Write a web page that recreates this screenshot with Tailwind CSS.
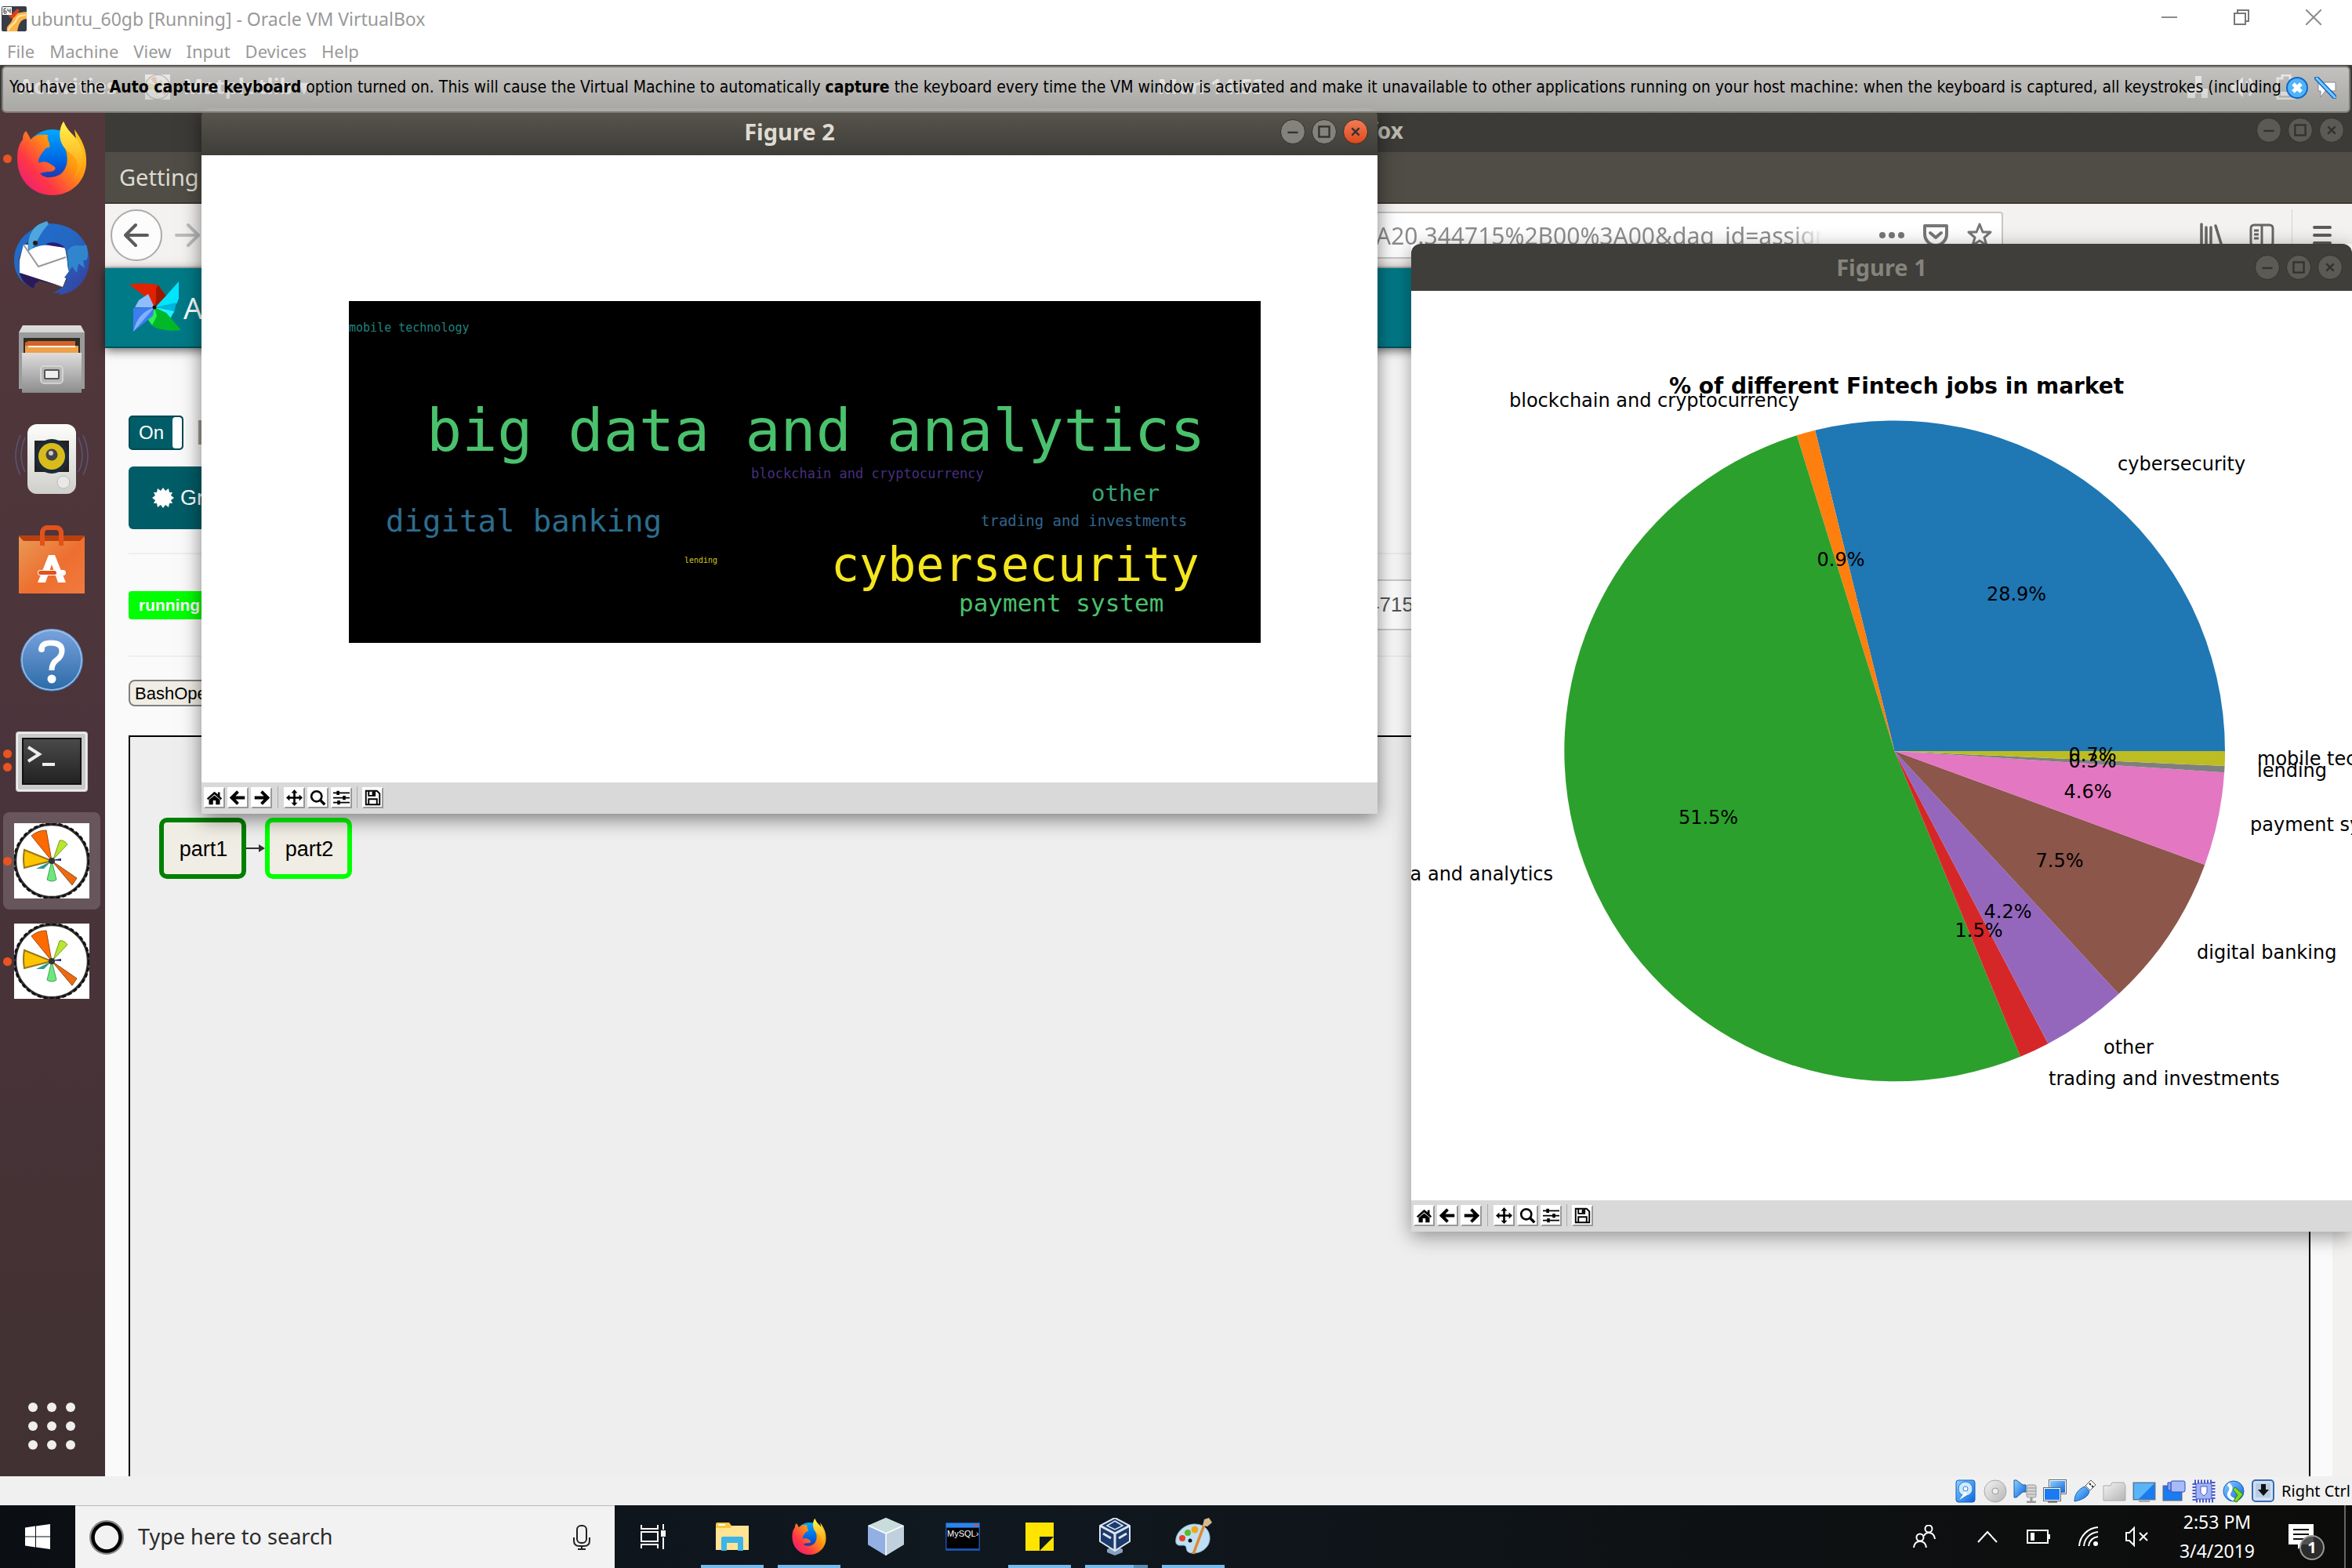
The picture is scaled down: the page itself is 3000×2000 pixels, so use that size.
<!DOCTYPE html>
<html lang="en">
<head>
<meta charset="utf-8">
<title>ubuntu_60gb [Running] - Oracle VM VirtualBox</title>
<script src="https://cdn.jsdelivr.net/npm/@tailwindcss/browser@4"></script>
</head>
<body class="flex h-screen flex-col overflow-hidden bg-white font-['Noto_Sans','Open_Sans',sans-serif] text-black">

<!-- Shared icons -->
<svg class="absolute size-0" aria-hidden="true">
  <defs>
    <linearGradient id="fxBody" x1="1" y1="0" x2="0" y2="1"><stop offset="0" stop-color="#ffe226"/><stop offset=".4" stop-color="#ff980e"/><stop offset=".7" stop-color="#ff3647"/><stop offset="1" stop-color="#e31587"/></linearGradient>
    <linearGradient id="fxGlobe" x1="0" y1="0" x2="0" y2="1"><stop offset="0" stop-color="#00a8ff"/><stop offset=".6" stop-color="#0060df"/><stop offset="1" stop-color="#3a1e8c"/></linearGradient>
    <linearGradient id="fxTail" x1="0" y1="0" x2="0" y2="1"><stop offset="0" stop-color="#fff44f"/><stop offset="1" stop-color="#ff980e"/></linearGradient>
    <linearGradient id="tb" x1="0" y1="0" x2="1" y2="1"><stop offset="0" stop-color="#1f6fd0"/><stop offset=".5" stop-color="#2467c0"/><stop offset="1" stop-color="#3a3a9a"/></linearGradient>
    <linearGradient id="silver" x1="0" y1="0" x2="0" y2="1"><stop offset="0" stop-color="#dedede"/><stop offset="1" stop-color="#8c8c8c"/></linearGradient>
    <linearGradient id="box" x1="0" y1="0" x2="0" y2="1"><stop offset="0" stop-color="#fdfdfc"/><stop offset="1" stop-color="#cfcfcb"/></linearGradient>
    <linearGradient id="bag" x1="0" y1="0" x2="1" y2="1"><stop offset="0" stop-color="#e89a56"/><stop offset=".55" stop-color="#ee6f2f"/><stop offset="1" stop-color="#f07a40"/></linearGradient>
    <linearGradient id="help" x1="0" y1="0" x2="0" y2="1"><stop offset="0" stop-color="#7aa3de"/><stop offset="1" stop-color="#2a6aa6"/></linearGradient>
    <linearGradient id="screen" x1="0" y1="0" x2="0" y2="1"><stop offset="0" stop-color="#4a4a4a"/><stop offset="1" stop-color="#222"/></linearGradient>
    <linearGradient id="vb" x1="0" y1="0" x2="1" y2="1"><stop offset="0" stop-color="#8cd2ff"/><stop offset="1" stop-color="#0a63e0"/></linearGradient>
    <linearGradient id="grey" x1="0" y1="0" x2="1" y2="1"><stop offset="0" stop-color="#f4f4f4"/><stop offset="1" stop-color="#b4b4b4"/></linearGradient>

    <symbol id="firefox" viewBox="0 0 90 94">
      <circle cx="46" cy="46" r="36" fill="url(#fxGlobe)"/>
      <path d="M12 12C15 16 17 20 18 23C26 15 33 17 40 17C38 24 44 27 42 33C36 33 35 38 32 41C27 48 27 54 31 52C38 49 46 56 49 58C51 62 46 64 40 64C34 65 30 66 30 66C34 72 43 72 50 70C64 66 68 50 62 34C55 22 53 10 60 0C66 14 72 16 76 22L74 10C84 24 90 36 89 54C88 76 70 94 46 94C20 94 1 74 1 48C1 34 4 28 8 23C8 18 9 15 12 12Z" fill="url(#fxBody)"/>
      <path d="M60 0C66 14 73 16 79 26C88 40 86 60 74 72C82 56 78 48 68 40C54 30 52 14 60 0Z" fill="url(#fxTail)"/>
    </symbol>
    <symbol id="mpl" viewBox="0 0 96 96">
      <rect width="96" height="96" fill="#fff"/>
      <circle cx="48" cy="48" r="46.500" fill="#fff" stroke="#333" stroke-width="3.500"/>
      <circle cx="48" cy="48" r="47.500" fill="none" stroke="#111" stroke-width="3" stroke-dasharray="5 3"/>
      <path d="M48 48L22 16Q30 9 41 9Z" fill="#ff6a00" stroke="#9c4a10"/>
      <path d="M48 48L13 57Q11 46 13 34Z" fill="#ffc400" stroke="#96761a" stroke-width="2"/>
      <path d="M50 46L58 22Q64 21 68 27Z" fill="#b8e62e" stroke="#7a9a2a"/>
      <path d="M48 48L80 70L74 79Z" fill="#ee6a10" stroke="#8a4a1a"/>
      <path d="M48 48L42 72Q48 76 54 72Z" fill="#6be87a" stroke="#4a9a5a"/>
      <path d="M48 48L28 58L38 58Z" fill="#2a9a90"/><path d="M46 47L60 45L60 48Z" fill="#1a2a7a"/>
      <circle cx="48" cy="48" r="4" fill="#333"/>
    </symbol>
    <symbol id="t-home" viewBox="0 0 24 24"><path d="M12 3L1 13L3 15L12 7L21 15L23 13L20 10V4H17V7ZM4 15V22H10V16H14V22H20V15L12 8.500Z"/></symbol>
    <symbol id="t-back" viewBox="0 0 24 24"><path d="M12 3L3 12L12 21M4 12H22" fill="none" stroke="#000" stroke-width="4.500"/></symbol>
    <symbol id="t-fwd" viewBox="0 0 24 24"><path d="M12 3L21 12L12 21M20 12H2" fill="none" stroke="#000" stroke-width="4.500"/></symbol>
    <symbol id="t-pan" viewBox="0 0 24 24"><path d="M12 0L16.500 5H13.500V10.500H19V7.500L24 12L19 16.500V13.500H13.500V19H16.500L12 24L7.500 19H10.500V13.500H5V16.500L0 12L5 7.500V10.500H10.500V5H7.500Z"/></symbol>
    <symbol id="t-zoom" viewBox="0 0 24 24"><circle cx="10" cy="10" r="7.500" fill="none" stroke="#000" stroke-width="3"/><path d="M15 15L22 22" stroke="#000" stroke-width="4"/></symbol>
    <symbol id="t-sub" viewBox="0 0 24 24"><path d="M0 5H24M0 12H24M0 19H24" stroke="#000" stroke-width="2"/><path d="M5 2H9V8H5ZM14 9H18V15H14ZM6 16H10V22H6Z"/></symbol>
    <symbol id="t-save" viewBox="0 0 24 24"><path d="M2 2H18L22 6V22H2Z M6 22V14H18V22M6 2V9H15V2" fill="none" stroke="#000" stroke-width="2.200"/><path d="M11 3H14V8H11Z"/></symbol>
    <symbol id="w-min" viewBox="0 0 32 32"><path d="M9 17H23" stroke="#33322e" stroke-width="2.500"/></symbol>
    <symbol id="w-max" viewBox="0 0 32 32"><rect x="9" y="9" width="14" height="14" fill="none" stroke="#33322e" stroke-width="2.500"/></symbol>
    <symbol id="w-close" viewBox="0 0 32 32"><path d="M11 11L21 21M21 11L11 21" stroke="#33322e" stroke-width="2.500"/></symbol>
  </defs>
</svg>

<!-- Host window title bar -->
<header class="flex h-12 shrink-0 items-center text-[#999]">
  <svg class="ml-[2px] h-8 w-8" viewBox="0 0 32 32"><rect width="32" height="32" rx="2" fill="#363c48"/><path d="M7 32C5 24 12 24 14 16C16 8 22 8 32 7V16C24 17 22 22 20 32Z" fill="#fdb44a"/><path d="M7 8C12 20 16 16 23 5L20 3L13 10Z" fill="#d8421a"/><path d="M9 31C9 24 17 24 19 17C21 11 26 12 31 11" fill="none" stroke="#ffe9a8" stroke-width="2"/><rect x="1" y="1" width="12" height="10" fill="#fff"/><path d="M6 3H3V9H6V6H3M8 3V6H11M11 3V9" stroke="#333" fill="none"/></svg>
  <h1 class="ml-[5px] whitespace-nowrap text-[23px] leading-8">ubuntu_60gb [Running] - Oracle VM VirtualBox</h1>
  <div class="ml-auto flex pr-[3px] pb-1">
    <button aria-label="Minimize" class="grid h-11 w-[92px] place-items-center"><svg class="size-5" viewBox="0 0 20 20"><path d="M0 10H20" stroke="#8c8c8c" stroke-width="2"/></svg></button>
    <button aria-label="Restore" class="grid h-11 w-[92px] place-items-center"><svg class="size-5" viewBox="0 0 20 20" fill="none" stroke="#777" stroke-width="2"><path d="M1 5H15V19H1ZM5 5V1H19V15H15"/></svg></button>
    <button aria-label="Close" class="grid h-11 w-[92px] place-items-center"><svg class="size-5" viewBox="0 0 20 20"><path d="M0 0L20 20M20 0L0 20" stroke="#8c8c8c" stroke-width="2"/></svg></button>
  </div>
</header>
<nav class="flex h-[35px] shrink-0 items-center gap-[19px] border-b border-[#e4e4e4] pl-[9px] text-[22px] leading-8 text-[#999]">
  <a href="#">File</a><a href="#">Machine</a><a href="#">View</a><a href="#">Input</a><a href="#">Devices</a><a href="#">Help</a>
</nav>

<!-- Guest screen -->
<main class="relative flex min-h-0 flex-1 flex-col overflow-hidden bg-[#eee]">
  <!-- GNOME top bar -->
  <div class="flex h-[55px] shrink-0 items-center bg-[#3c3b37] px-6 text-[27px] font-bold text-white">
    <div class="flex flex-1 items-center gap-9"><span>Activities</span><span class="flex items-center gap-4"><svg class="size-8"><use href="#mpl"/></svg>Matplotlib ▾</span></div>
    <time class="ml-[134px]">Mon 14:53</time>
    <div class="flex flex-1 justify-end gap-6 pr-11">
      <svg class="size-8" viewBox="0 0 32 32" fill="#fff"><path d="M12 2H20V12H16V18H28V30H20V24H12V30H2V18H12Z"/></svg>
      <svg class="size-8" viewBox="0 0 32 32" fill="#fff"><path d="M2 11H9L17 3V29L9 21H2Z"/><path d="M21 9Q26 16 21 23M25 5Q33 16 25 27" fill="none" stroke="#fff" stroke-width="3"/></svg>
      <svg class="size-8" viewBox="0 0 32 32"><path d="M5 5H11V1H21V5H27V31H5Z" fill="none" stroke="#fff" stroke-width="3"/><path d="M9 22H23V27H9Z" fill="#fff"/></svg>
    </div>
  </div>

  <div class="flex min-h-0 flex-1">
    <!-- Dock -->
    <aside class="flex w-[134px] shrink-0 flex-col bg-linear-to-b from-[#53383b] via-[#4a343b] to-[#413132] pr-[2px]">
      <button aria-label="Firefox" class="relative grid h-32 place-items-center"><span class="absolute left-1 size-[11px] rounded-full bg-[#e95420]"></span><svg class="h-[94px] w-[90px]"><use href="#firefox"/></svg></button>
      <button aria-label="Thunderbird" class="grid h-32 place-items-center">
        <svg class="size-24" viewBox="0 0 96 96"><path d="M38 6C14 10 0 30 0 50C0 68 10 80 25 86L30 74L8 66L6 48L14 30Z" fill="url(#tb)"/><path d="M7 50L12 30L37 30L65 34L70 64L62 84L7 66Z" fill="#fff"/><path d="M12 30L31 58L66 46" fill="none" stroke="#999" stroke-width="2"/><path d="M7 66L60 83L32 76L27 80L25 86C16 82 9 76 7 66Z" fill="#2a1a5a"/><path d="M42 0L34 3C22 8 16 20 18 38C30 30 46 28 64 34C70 42 66 56 70 64L64 72L68 74L62 84L50 92L60 91L56 94C84 92 96 70 96 48C94 18 70 2 42 3Z" fill="url(#tb)"/><path d="M42 0L32 4C22 10 16 22 19 38C30 30 30 18 44 4Z" fill="#4fa6dc"/><path d="M68 38C76 26 84 34 92 30C96 44 94 52 88 50L90 60L82 54L80 66L74 58L70 64Z" fill="#2f86cc"/><path d="M40 29Q54 24 65 34L48 31Z" fill="#2a1a7a"/><circle cx="27" cy="28" r="3" fill="#2b1a10"/></svg>
      </button>
      <button aria-label="Files" class="grid h-32 place-items-center">
        <svg class="h-[88px] w-[84px]" viewBox="0 0 84 88"><path d="M5 1H79L84 10V82H0V10Z" fill="url(#silver)"/><path d="M0 10H84V82H0Z" fill="#9b9b9b"/><path d="M6 17H78V38H6Z" fill="#2c2c28"/><path d="M12 21H72V38H8V23Z" fill="#d4622a"/><path d="M8 27H76V38H8Z" fill="#f0a048"/><path d="M12 28H72" stroke="#fff" stroke-width="2"/><path d="M4 36H80V87H4Z" fill="url(#silver)"/><rect x="28" y="53" width="28" height="22" rx="4" fill="#b8b8b8" stroke="#ddd" stroke-width="1.500"/><rect x="33" y="58" width="18" height="11" rx="1" fill="#eee" stroke="#555" stroke-width="2"/></svg>
      </button>
      <button aria-label="Rhythmbox" class="grid h-32 place-items-center">
        <svg class="h-[92px] w-24" viewBox="0 0 96 92"><path d="M8 15Q-4 42 8 66M88 15Q100 42 88 66M14 18Q4 42 14 62M82 18Q92 42 82 62" stroke="#5a5478" fill="none" stroke-width="1.500"/><rect x="17" y="1" width="62" height="89" rx="12" fill="url(#box)"/><path d="M26 22H70V62H26Z" fill="#222"/><circle cx="48" cy="42" r="22" fill="#1d2a38"/><circle cx="48" cy="42" r="17" fill="#d8bc1c"/><circle cx="48" cy="40" r="7.500" fill="#444"/><circle cx="47" cy="38" r="3" fill="#ccc"/><circle cx="63" cy="75" r="8" fill="#e8e8e8" stroke="#bbb"/></svg>
      </button>
      <button aria-label="Ubuntu Software" class="grid h-32 place-items-center">
        <svg class="h-[88px] w-[84px]" viewBox="0 0 84 88"><path d="M0 13H84L79 26H5Z" fill="#b8400e"/><path d="M0 14L6 20H78L84 14V87H0Z" fill="url(#bag)"/><path d="M30 26V8Q32 3 36 3H48Q52 3 54 8V26" fill="none" stroke="#e2521c" stroke-width="6"/><path d="M24 73L38 38H46L60 73H50L42 50L34 73Z" fill="#fff"/><rect x="24" y="57" width="36" height="7" rx="3.500" fill="#fff"/><rect x="25" y="58" width="23" height="5" rx="2.500" fill="#e2521c"/></svg>
      </button>
      <button aria-label="Help" class="grid h-32 place-items-center">
        <svg class="size-[82px]" viewBox="0 0 82 82"><circle cx="41" cy="41" r="40" fill="url(#help)"/><circle cx="41" cy="41" r="38" fill="none" stroke="#9dc0ea" stroke-width="1.500"/><path d="M28 27Q28 19 40 19Q54 19 54 29Q54 36 47 41Q41 45 41 54" fill="none" stroke="#fff" stroke-width="7"/><circle cx="28" cy="27" r="4" fill="#fff"/><circle cx="41" cy="65" r="5.500" fill="#fff"/></svg>
      </button>
      <button aria-label="Terminal" class="relative grid h-32 place-items-center pt-1"><span class="absolute left-1 flex flex-col gap-[6px]"><span class="size-[11px] rounded-full bg-[#e95420]"></span><span class="size-[11px] rounded-full bg-[#e95420]"></span></span>
        <svg class="h-[78px] w-[92px]" viewBox="0 0 92 78"><rect width="92" height="77" rx="4" fill="#c9c9c9"/><rect x="2" y="2" width="88" height="73" rx="3" fill="none" stroke="#eee" stroke-width="2"/><rect x="8" y="8" width="76" height="60" fill="#111"/><rect x="10" y="10" width="72" height="56" fill="url(#screen)"/><path d="M16 20L30 29L16 38" fill="none" stroke="#eee" stroke-width="4"/><path d="M34 42H50" stroke="#eee" stroke-width="4"/></svg>
      </button>
      <button aria-label="Figure 2" class="relative grid h-32 place-items-center"><span class="absolute inset-y-[2px] left-1 w-[124px] rounded-lg bg-white/17"></span><span class="absolute left-1 size-[11px] rounded-full bg-[#e95420]"></span><svg class="relative size-24"><use href="#mpl"/></svg></button>
      <button aria-label="Figure 1" class="relative grid h-32 place-items-center"><span class="absolute left-1 size-[11px] rounded-full bg-[#e95420]"></span><svg class="size-24"><use href="#mpl"/></svg></button>
      <button aria-label="Show Applications" class="mt-auto grid h-32 place-items-center">
        <svg class="size-[60px]" viewBox="0 0 60 60" fill="#f0eeee"><circle cx="6" cy="6" r="6"/><circle cx="30" cy="6" r="6"/><circle cx="54" cy="6" r="6"/><circle cx="6" cy="30" r="6"/><circle cx="30" cy="30" r="6"/><circle cx="54" cy="30" r="6"/><circle cx="6" cy="54" r="6"/><circle cx="30" cy="54" r="6"/><circle cx="54" cy="54" r="6"/></svg>
      </button>
    </aside>

    <!-- Firefox window -->
    <section class="flex min-w-0 flex-1 flex-col bg-[#fafafa]">
      <div class="flex h-14 shrink-0 items-center justify-end bg-[#3c3b37] pr-[10px]">
        <div class="mr-auto w-[1656px] text-right text-[28px] font-bold text-[#bdb9b0]">Mozilla Firefox</div>
        <div class="flex gap-2">
          <button aria-label="Minimize" class="size-8 rounded-full border border-[#33322e] bg-[#5b5a54]"><svg class="size-full"><use href="#w-min"/></svg></button>
          <button aria-label="Maximize" class="size-8 rounded-full border border-[#33322e] bg-[#5b5a54]"><svg class="size-full"><use href="#w-max"/></svg></button>
          <button aria-label="Close" class="size-8 rounded-full border border-[#33322e] bg-[#5b5a54]"><svg class="size-full"><use href="#w-close"/></svg></button>
        </div>
      </div>
      <div class="flex h-[66px] shrink-0 items-center border-b-2 border-[#3a3833] bg-[#504d46] pl-[18px] text-[29px] text-[#dfdbd2]"><a href="#">Getting</a></div>
      <div class="flex h-[82px] shrink-0 items-center border-b-2 border-[#cbc8c5] bg-[#f3f2f0] pl-[7px] pr-[26px] text-[#6a6968]">
        <button aria-label="Back" class="grid size-[66px] shrink-0 place-items-center rounded-full border-2 border-[#adaba9] bg-[#fcfcfc]"><svg class="size-8" viewBox="0 0 32 32" fill="none" stroke="#5c5c5c" stroke-width="4" stroke-linecap="round" stroke-linejoin="round"><path d="M15 3L2 16L15 29M3 16H30"/></svg></button>
        <button aria-label="Forward" class="ml-4 shrink-0"><svg class="size-8" viewBox="0 0 32 32" fill="none" stroke="#bbb" stroke-width="4" stroke-linecap="round" stroke-linejoin="round"><path d="M17 3L30 16L17 29M29 16H2"/></svg></button>
        <div class="ml-[500px] mr-[250px] flex h-[60px] min-w-0 flex-1 items-center justify-end rounded-[4px] border-2 border-[#cac7c4] bg-white pr-3">
          <input aria-label="Address" class="mr-[72px] h-12 w-[570px] bg-linear-to-r from-[#8c8c8c] from-92% to-transparent bg-clip-text text-[30px] text-transparent outline-none" value="A20.344715%2B00%3A00&amp;dag_id=assignn">
          <button aria-label="Page actions" class="mr-6"><svg class="size-8" viewBox="0 0 32 32" fill="#777"><circle cx="4" cy="16" r="4"/><circle cx="16" cy="16" r="4"/><circle cx="28" cy="16" r="4"/></svg></button>
          <button aria-label="Save to Pocket" class="mr-6"><svg class="size-8" viewBox="0 0 32 32" fill="none" stroke="#777" stroke-width="4" stroke-linecap="round" stroke-linejoin="round"><path d="M2 4H30V14C30 23 23 29 16 29S2 23 2 14ZM9 13L16 19L23 13"/></svg></button>
          <button aria-label="Bookmark"><svg class="size-8" viewBox="0 0 32 32" fill="none" stroke="#777" stroke-width="3" stroke-linejoin="round"><path d="M16 2L20 12L30 12L22 19L25 29L16 23L7 29L10 19L2 12L12 12Z"/></svg></button>
        </div>
        <button aria-label="Library" class="mr-8"><svg class="h-8 w-8" viewBox="0 0 32 32" stroke="#666" stroke-width="3.500" stroke-linecap="round"><path d="M3 2V30M9 6V30M15 6V30M21 4L29 30"/></svg></button>
        <button aria-label="Sidebars" class="mr-[22px]"><svg class="h-8 w-8" viewBox="0 0 32 32" fill="none" stroke="#666" stroke-width="3"><rect x="2" y="3" width="28" height="26" rx="4"/><path d="M16 3V29M6 10H12M6 15H12M6 20H12"/></svg></button>
        <span class="mr-[26px] h-[66px] w-px bg-[#d4d2d0]"></span>
        <button aria-label="Menu"><svg class="size-6" viewBox="0 0 24 24" stroke="#5c5c5c" stroke-width="4" stroke-linecap="round"><path d="M2 2H22M2 12H22M2 22H22"/></svg></button>
      </div>

      <!-- Airflow page -->
      <div class="flex min-h-0 flex-1">
        <div class="flex min-w-0 flex-1 flex-col">
          <div class="z-0 flex h-[102px] shrink-0 items-center gap-[2px] border-b-2 border-[#00525b] bg-[#007a87] pl-[30px] shadow-[0_3px_12px_rgba(0,0,0,0.6)]">
            <svg class="h-[70px] w-[68px]" viewBox="0 0 68 70"><path d="M33 35L22 22L1 6C14 4 28 4 38 7L51 25Z" fill="#e02200"/><path d="M33 35L51 25L38 7C32 12 38 22 33 35Z" fill="#9c1600"/><path d="M34 35L49 19L64 2V24L61 31Z" fill="#00e5ff"/><path d="M34 35L61 29L58 42L46 50Z" fill="#00b4dc"/><path d="M34 35L58 40L54 48L46 52Z" fill="#19f4ff"/><path d="M33 35L48 42L67 64C54 66 42 64 32 60L20 44Z" fill="#00b828"/><path d="M33 35L36 46L30 58L20 44Z" fill="#2bf24e"/><path d="M33 35L31 46L6 66V36Z" fill="#3f7cf0"/><path d="M33 35L6 66C10 52 14 42 33 35Z" fill="#7fb2fa"/><path d="M33 35L8 35L13 26L25 18Z" fill="#8ebcff"/><circle cx="33" cy="35" r="2.500" fill="#111"/></svg>
            <a href="#" class="text-[38px] leading-10 text-white">Airflow</a>
          </div>
          <div class="flex min-h-0 flex-1 flex-col pl-[30px] pr-7 font-['Liberation_Sans',sans-serif]">
            <div class="mt-[86px] flex h-11 shrink-0 items-center gap-4">
              <button role="switch" aria-checked="true" class="flex h-11 w-[70px] items-center justify-between rounded-[5px] border-2 border-[#004a53] bg-[#005c66] pl-[11px] text-[24px] leading-10 text-white">On<span class="h-10 w-3 rounded-[4px] bg-white"></span></button>
              <h2 class="text-[44px] leading-[44px] font-bold text-[#999]">DAG</h2>
            </div>
            <div class="mt-[21px] flex shrink-0"><button class="flex h-20 items-center gap-2 rounded-[6px] bg-[#005c66] pl-[30px] pr-8 text-[27px] text-white"><svg class="size-7" viewBox="-14 -14 28 28" fill="#fff"><path d="M0-13L3-9L7-12L8-7L12-7L10-3L14 0L10 3L12 7L8 7L7 12L3 9L0 13L-3 9L-7 12L-8 7L-12 7L-10 3L-14 0L-10-3L-12-7L-8-7L-7-12L-3-9Z"/></svg>Graph</button></div>
            <hr class="mt-[30px] shrink-0 border-t-2 border-[#eee]">
            <div class="mt-8 flex h-[65px] shrink-0 items-center">
              <span class="flex h-9 items-center rounded-[4px] bg-[#00ff00] px-[13px] text-[21px] font-bold text-white">running</span>
              <input aria-label="Run" class="ml-[1290px] h-[65px] w-[300px] rounded-md border-2 border-[#ccc] bg-white pl-[156px] text-[26px] text-[#555] outline-none" value="344715">
            </div>
            <hr class="mt-[32px] shrink-0 border-t-2 border-[#eee]">
            <div class="mt-[29px] flex shrink-0"><span class="flex h-[34px] items-center rounded-[8px] border-2 border-[#808080] bg-[#f0ede4] px-[6px] text-[22px]">BashOperator</span></div>
            <div class="mt-[37px] flex-1 border-2 border-b-0 border-black bg-[#eee]">
              <div class="flex items-center pl-[37px] pt-[103px] text-[27px]">
                <a href="#" class="grid h-[78px] w-[111px] place-items-center rounded-[10px] border-[6px] border-[#008000] bg-[#f0ede4] pt-[2px] pl-[2px]">part1</a>
                <svg class="h-3 w-6" viewBox="0 0 24 12"><path d="M0 6H22" stroke="#333" stroke-width="2"/><path d="M16 1L24 6L16 11Z" fill="#333"/></svg>
                <a href="#" class="grid h-[78px] w-[111px] place-items-center rounded-[10px] border-[6px] border-[#00ff00] bg-[#f0ede4] pt-[2px] pl-[2px]">part2</a>
              </div>
            </div>
          </div>
        </div>
        <div class="w-[25px] bg-[#f3f1ef]"></div>
      </div>
    </section>
  </div>

  <!-- Figure 2 window -->
  <section class="absolute left-[257px] top-[55px] flex w-[1500px] flex-col shadow-[0_6px_24px_rgba(0,0,0,0.5)]">
    <div class="relative flex h-[60px] items-center justify-center rounded-t-[12px] bg-linear-to-b from-[#5a574e] to-[#3e3d38] text-[29px] font-bold text-[#dfdbd2]">
      <h2>Figure 2</h2>
      <div class="absolute right-3 flex gap-2">
        <button aria-label="Minimize" class="size-8 rounded-full border border-[#33322e] bg-[#83827b]"><svg class="size-full"><use href="#w-min"/></svg></button>
        <button aria-label="Maximize" class="size-8 rounded-full border border-[#33322e] bg-[#83827b]"><svg class="size-full"><use href="#w-max"/></svg></button>
        <button aria-label="Close" class="size-8 rounded-full border border-[#33322e] bg-linear-to-b from-[#f37a56] to-[#dd4814]"><svg class="size-full"><use href="#w-close"/></svg></button>
      </div>
    </div>
    <div class="h-[800px] bg-white">
      <svg class="h-full w-full font-['DejaVu_Sans_Mono',monospace]" viewBox="0 0 1500 800">
        <rect x="188" y="186" width="1163" height="436"/>
        <text x="188" y="225" class="text-[15px]" fill="#21807a">mobile technology</text>
        <text x="287" y="377" class="text-[75px]" fill="#4ac16d">big data and analytics</text>
        <text x="701" y="412" class="text-[17px]" fill="#472f7d">blockchain and cryptocurrency</text>
        <text x="1135" y="441" class="text-[29px]" fill="#35a878">other</text>
        <text x="235" y="480" class="text-[39px]" fill="#2d6d8e">digital banking</text>
        <text x="994" y="473" class="text-[19px]" fill="#31658e">trading and investments</text>
        <text x="616" y="520" class="text-[10px]" fill="#d2c81e">lending</text>
        <text x="803" y="543" class="text-[60px]" fill="#f4e61e">cybersecurity</text>
        <text x="966" y="582" class="text-[31px]" fill="#4ac16d">payment system</text>
      </svg>
    </div>
    <div class="flex h-10 items-center gap-[3px] bg-[#d9d9d9] pb-[2px] pl-[3px]">
      <button aria-label="Home" class="border-2 border-t-white border-l-white border-r-[#999] border-b-[#999] bg-white p-px"><svg class="size-[21px]"><use href="#t-home"/></svg></button>
      <button aria-label="Back" class="border-2 border-t-white border-l-white border-r-[#999] border-b-[#999] bg-white p-px"><svg class="size-[21px]"><use href="#t-back"/></svg></button>
      <button aria-label="Forward" class="border-2 border-t-white border-l-white border-r-[#999] border-b-[#999] bg-white p-px"><svg class="size-[21px]"><use href="#t-fwd"/></svg></button>
      <span class="mx-1 h-7 w-px bg-[#aaa]"></span>
      <button aria-label="Pan" class="border-2 border-t-white border-l-white border-r-[#999] border-b-[#999] bg-white p-px"><svg class="size-[21px]"><use href="#t-pan"/></svg></button>
      <button aria-label="Zoom" class="border-2 border-t-white border-l-white border-r-[#999] border-b-[#999] bg-white p-px"><svg class="size-[21px]"><use href="#t-zoom"/></svg></button>
      <button aria-label="Subplots" class="border-2 border-t-white border-l-white border-r-[#999] border-b-[#999] bg-white p-px"><svg class="size-[21px]"><use href="#t-sub"/></svg></button>
      <span class="mx-[3px] h-7 w-px bg-[#aaa]"></span>
      <button aria-label="Save" class="border-2 border-t-white border-l-white border-r-[#999] border-b-[#999] bg-white p-px"><svg class="size-[21px]"><use href="#t-save"/></svg></button>
    </div>
  </section>

  <!-- Figure 1 window -->
  <section class="absolute left-[60%] right-0 top-[228px] flex flex-col shadow-[0_6px_24px_rgba(0,0,0,0.4)]">
    <div class="relative flex h-[60px] items-center justify-center rounded-t-[12px] bg-[#3f3e3a] text-[29px] font-bold text-[#85837c]">
      <h2>Figure 1</h2>
      <div class="absolute right-3 flex gap-2">
        <button aria-label="Minimize" class="size-8 rounded-full border border-[#33322e] bg-[#5b5a54]"><svg class="size-full"><use href="#w-min"/></svg></button>
        <button aria-label="Maximize" class="size-8 rounded-full border border-[#33322e] bg-[#5b5a54]"><svg class="size-full"><use href="#w-max"/></svg></button>
        <button aria-label="Close" class="size-8 rounded-full border border-[#33322e] bg-[#5b5a54]"><svg class="size-full"><use href="#w-close"/></svg></button>
      </div>
    </div>
    <div class="h-[1160px] bg-white">
      <svg class="h-full w-full font-['DejaVu_Sans',sans-serif] text-[24px]" viewBox="0 0 1200 1160">
        <path d="M616.500 587L1038 587A421.500 421.500 0 0 0 515.200 177.800Z" fill="#1f77b4"/>
        <path d="M616.500 587L515.200 177.800A421.500 421.500 0 0 0 491.900 184.300Z" fill="#ff7f0e"/>
        <path d="M616.500 587L491.900 184.300A421.500 421.500 0 1 0 777.100 976.700Z" fill="#2ca02c"/>
        <path d="M616.500 587L777.100 976.700A421.500 421.500 0 0 0 812.400 960.200Z" fill="#d62728"/>
        <path d="M616.500 587L812.400 960.200A421.500 421.500 0 0 0 902.400 896.800Z" fill="#9467bd"/>
        <path d="M616.500 587L902.400 896.800A421.500 421.500 0 0 0 1012.300 731.900Z" fill="#8c564b"/>
        <path d="M616.500 587L1012.300 731.900A421.500 421.500 0 0 0 1037.100 614.200Z" fill="#e377c2"/>
        <path d="M616.500 587L1037.100 614.200A421.500 421.500 0 0 0 1037.600 606.100Z" fill="#7f7f7f"/>
        <path d="M616.500 587L1037.600 606.100A421.500 421.500 0 0 0 1038 587Z" fill="#bcbd22"/>
        <text x="619" y="131" text-anchor="middle" class="text-[28px] font-bold">% of different Fintech jobs in market</text>
        <text x="125" y="148">blockchain and cryptocurrency</text>
        <text x="901" y="229">cybersecurity</text>
        <text x="181" y="752" text-anchor="end">big data and analytics</text>
        <text x="813" y="1013">trading and investments</text>
        <text x="883" y="973">other</text>
        <text x="1002" y="852">digital banking</text>
        <text x="1070" y="689">payment system</text>
        <text x="1079" y="620">lending</text>
        <text x="1079" y="605">mobile technology</text>
        <g text-anchor="middle">
          <text x="548" y="351">0.9%</text><text x="772" y="395">28.9%</text><text x="379" y="680">51.5%</text>
          <text x="724" y="824">1.5%</text><text x="761" y="800">4.2%</text><text x="827" y="735">7.5%</text>
          <text x="863" y="647">4.6%</text><text x="869" y="608">0.3%</text><text x="869" y="600">0.7%</text>
        </g>
      </svg>
    </div>
    <div class="flex h-10 items-center gap-[3px] bg-[#d9d9d9] pb-[2px] pl-[3px]">
      <button aria-label="Home" class="border-2 border-t-white border-l-white border-r-[#999] border-b-[#999] bg-white p-px"><svg class="size-[21px]"><use href="#t-home"/></svg></button>
      <button aria-label="Back" class="border-2 border-t-white border-l-white border-r-[#999] border-b-[#999] bg-white p-px"><svg class="size-[21px]"><use href="#t-back"/></svg></button>
      <button aria-label="Forward" class="border-2 border-t-white border-l-white border-r-[#999] border-b-[#999] bg-white p-px"><svg class="size-[21px]"><use href="#t-fwd"/></svg></button>
      <span class="mx-1 h-7 w-px bg-[#aaa]"></span>
      <button aria-label="Pan" class="border-2 border-t-white border-l-white border-r-[#999] border-b-[#999] bg-white p-px"><svg class="size-[21px]"><use href="#t-pan"/></svg></button>
      <button aria-label="Zoom" class="border-2 border-t-white border-l-white border-r-[#999] border-b-[#999] bg-white p-px"><svg class="size-[21px]"><use href="#t-zoom"/></svg></button>
      <button aria-label="Subplots" class="border-2 border-t-white border-l-white border-r-[#999] border-b-[#999] bg-white p-px"><svg class="size-[21px]"><use href="#t-sub"/></svg></button>
      <span class="mx-[3px] h-7 w-px bg-[#aaa]"></span>
      <button aria-label="Save" class="border-2 border-t-white border-l-white border-r-[#999] border-b-[#999] bg-white p-px"><svg class="size-[21px]"><use href="#t-save"/></svg></button>
    </div>
  </section>

  <!-- Host notification laid over the guest -->
  <div role="alert" class="absolute inset-x-[2px] top-px flex h-[60px] items-center rounded-[6px] border-2 border-[#7d7c79] bg-linear-to-b from-[#eae8e6]/78 to-[#c0c0bd]/82 px-2 pb-1">
    <p class="min-w-0 flex-1 whitespace-nowrap font-['DejaVu_Sans_Condensed','DejaVu_Sans',sans-serif] text-[21px]">You have the <b>Auto capture keyboard</b> option turned on. This will cause the Virtual Machine to automatically <b>capture</b> the keyboard every time the VM window is activated and make it unavailable to other applications running on your host machine: when the keyboard is captured, all keystrokes (including</p>
    <button aria-label="Close message" class="mr-2 shrink-0"><svg class="size-7" viewBox="0 0 28 28"><circle cx="14" cy="14" r="13" fill="#4fb4f8" stroke="#1468c8" stroke-width="2"/><path d="M9 9L19 19M19 9L9 19" stroke="#fff" stroke-width="5"/></svg></button>
    <button aria-label="Do not show again" class="mr-2 shrink-0"><svg class="size-7" viewBox="0 0 28 28"><path d="M5 7H27V18H14L8 26V18H5Z" fill="#fff" stroke="#888"/><path d="M3 2L26 26" stroke="#1468c8" stroke-width="6" stroke-linecap="round"/><path d="M3 2L26 26" stroke="#7ccafc" stroke-width="3" stroke-linecap="round"/></svg></button>
  </div>
</main>

<!-- VirtualBox status bar -->
<footer class="flex h-[37px] shrink-0 items-center justify-end gap-2 bg-[#f0f0f0] pr-[2px] text-[20px] leading-7">
  <svg class="size-[30px]" viewBox="0 0 30 30"><rect x="3" y="1" width="24" height="28" rx="3" fill="url(#vb)" stroke="#0a63c0"/><circle cx="15" cy="12" r="9" fill="#cfeaff" stroke="#2a7fd0"/><circle cx="15" cy="12" r="3" fill="#fff" stroke="#2a7fd0"/><path d="M7 26L15 15L17 20Z" fill="#fff"/></svg>
  <svg class="size-[30px]" viewBox="0 0 30 30"><circle cx="15" cy="15" r="14" fill="url(#grey)" stroke="#a8a8a8"/><circle cx="15" cy="15" r="4" fill="#eee" stroke="#999"/></svg>
  <svg class="size-[30px]" viewBox="0 0 30 30"><path d="M1 1H4L12 7H16V16H12L4 23H1Z" fill="url(#vb)" stroke="#1a5aa8"/><rect x="17" y="7" width="12" height="16" rx="2" fill="#d4d4d4" stroke="#999"/><path d="M17 11H29M17 15H29M17 19H29" stroke="#999"/><path d="M23 23V28M17 29H29" stroke="#999" stroke-width="3"/></svg>
  <svg class="size-[30px]" viewBox="0 0 30 30"><rect x="8" y="1" width="21" height="17" fill="url(#vb)" stroke="#fff" stroke-width="2"/><rect x="7.500" y=".5" width="22" height="18" fill="none" stroke="#666"/><rect x="1" y="11" width="21" height="16" fill="#1a7cf0" stroke="#fff" stroke-width="2"/><rect x=".5" y="10.500" width="22" height="17" fill="none" stroke="#666"/><path d="M6 29H18" stroke="#888" stroke-width="2"/></svg>
  <svg class="size-[30px]" viewBox="0 0 30 30"><path d="M2 28C2 18 8 12 15 9L21 15C20 22 12 26 2 28Z" fill="url(#vb)" stroke="#0a63c0"/><path d="M16 8L23 1L29 7L22 14Z" fill="#fff" stroke="#555"/><path d="M21 5L23 7M24 8L26 10" stroke="#333" stroke-width="2"/></svg>
  <svg class="size-[30px]" viewBox="0 0 30 30"><path d="M1 8H10L12 4H27L29 8V27H1Z" fill="url(#grey)" stroke="#aaa"/></svg>
  <svg class="size-[30px]" viewBox="0 0 30 30"><rect x="1" y="4" width="28" height="22" fill="#1a7cf0" stroke="#777"/><path d="M2 5H28L8 25H2Z" fill="#5ab4f8"/><path d="M8 28H22" stroke="#aaa" stroke-width="2"/></svg>
  <svg class="size-[30px]" viewBox="0 0 30 30"><rect x="1" y="8" width="24" height="19" fill="#1a7cf0" stroke="#666"/><rect x="11" y="2" width="18" height="14" rx="2" fill="#a6bcf8" stroke="#3a4ac0"/><path d="M7 4H11V14H7Z" fill="#8aa4f0" stroke="#3a4ac0"/></svg>
  <svg class="size-[30px]" viewBox="0 0 30 30"><rect x="3" y="3" width="24" height="24" fill="none" stroke="#4a5ac8" stroke-width="5" stroke-dasharray="2 2"/><rect x="5" y="5" width="20" height="20" rx="2" fill="#a0b4f8" stroke="#4a5ac8"/><path d="M11 9H19V17L15 21L11 17Z" fill="#fff" stroke="#4a5ac8"/></svg>
  <svg class="size-[30px]" viewBox="0 0 30 30"><circle cx="15" cy="15" r="13" fill="url(#vb)" stroke="#0a63c0"/><path d="M8 6Q14 10 10 16T16 26" stroke="#fff" stroke-width="4" fill="none"/><path d="M17 10L27 19L19 29L15 27L20 20L14 13Z" fill="#7cd82a" stroke="#2a7a0a"/></svg>
  <svg class="size-[30px]" viewBox="0 0 30 30"><rect x="1" y="1" width="27" height="27" rx="4" fill="#cfe0f4" stroke="#3a6ab0" stroke-width="2"/><rect x="5" y="5" width="19" height="18" fill="#b8cce4"/><path d="M12 6H18V13H22L15 21L8 13H12Z" fill="#111"/></svg>
  <span>Right Ctrl</span>
</footer>

<!-- Windows taskbar -->
<footer class="flex h-20 shrink-0 bg-linear-to-r from-[#0b0f14] via-[#101820] via-40% to-[#0c0c0a] text-white">
  <button aria-label="Start" class="grid w-24 place-items-center"><svg class="size-8" viewBox="0 0 32 32" fill="#fff"><path d="M0 4.500L13 2.600V15.500H0ZM14 2.400L32 0V15.500H14ZM0 16.500H13V29.400L0 27.500ZM14 16.500H32V32L14 29.600Z"/></svg></button>
  <label class="flex w-[688px] items-center border-t border-[#bbb] bg-[#f2f2f2] pl-[18px] pr-[30px]">
    <svg class="size-11" viewBox="0 0 44 44"><circle cx="22" cy="22" r="19" fill="none" stroke="#888" stroke-width="6"/><circle cx="22" cy="22" r="17.500" fill="none" stroke="#000" stroke-width="4.500"/></svg>
    <input class="ml-[18px] min-w-0 flex-1 bg-transparent text-[27px] outline-none placeholder:text-[#2b2b2b]" placeholder="Type here to search" aria-label="Type here to search">
    <svg class="h-8 w-6" viewBox="0 0 24 32" fill="none" stroke="#222" stroke-width="2"><rect x="6" y="1" width="12" height="22" rx="5"/><path d="M2 16V20Q2 27 9 27H15Q22 27 22 20V16M12 27V31M7 31H17"/></svg>
  </label>
  <button aria-label="Task View" class="grid w-[101px] place-items-center pr-1"><svg class="size-8" viewBox="0 0 32 32" fill="none" stroke="#fff" stroke-width="2"><path d="M1 1V6H22V1M1 10H22V22H1ZM1 31V26H22V31M29 0V7M29 17V32"/><path d="M27 9H32V15H27Z" fill="#fff"/></svg></button>
  <button aria-label="File Explorer" class="grid w-[98px] place-items-center bg-[linear-gradient(#76b9ed,#76b9ed)] bg-[length:80px_4px] bg-bottom bg-no-repeat"><svg class="h-9 w-[42px]" viewBox="0 0 42 36"><path d="M0 2Q0 0 2 0H17L20 4H42V35H0Z" fill="#f8c83c"/><path d="M0 7H18L21 4H42V35H0Z" fill="#ffe494"/><path d="M3 2H12V4H3Z" fill="#fff"/><path d="M7 36V20Q7 18 9 18H33Q35 18 35 20V36H28V26H14V36Z" fill="#3cb4e8"/></svg></button>
  <button aria-label="Firefox" class="grid w-[98px] place-items-center bg-[linear-gradient(#76b9ed,#76b9ed)] bg-[length:80px_4px] bg-bottom bg-no-repeat"><svg class="h-[46px] w-11"><use href="#firefox"/></svg></button>
  <button aria-label="NetBeans" class="grid w-[98px] place-items-center"><svg class="h-12 w-[46px]" viewBox="0 0 46 48"><path d="M23 0L46 10V34L23 48L0 34V10Z" fill="#d0e0f0"/><path d="M23 0L46 10L23 20L0 10Z" fill="#c8dcdc"/><path d="M0 10L23 20V48L0 34Z" fill="#93b0e4"/><path d="M46 10L23 20V48L46 34Z" fill="#c0d0dc"/><path d="M23 20V48M23 20L1 10M23 20L45 10" stroke="#fff" stroke-width="1.500"/></svg></button>
  <button aria-label="MySQL" class="grid w-[98px] place-items-center"><svg class="h-9 w-[46px] font-['Liberation_Sans',sans-serif] text-[11px]" viewBox="0 0 46 36"><rect x="1" width="44" height="36" rx="1" fill="#1c50a8"/><rect x="2" y="1" width="42" height="5" fill="#2a86e8"/><path d="M38 2H42V5H38Z" fill="#e0502a"/><rect x="2.500" y="7" width="41" height="26" fill="#000"/><text x="3" y="18" fill="#fff">MySQL›</text></svg></button>
  <button aria-label="Sticky Notes" class="grid w-[98px] place-items-center bg-[linear-gradient(#76b9ed,#76b9ed)] bg-[length:80px_4px] bg-bottom bg-no-repeat"><svg class="size-9" viewBox="0 0 36 36"><path d="M0 0H36V18H18V36H0Z" fill="#ffe400"/><path d="M36 18V36H18Z" fill="#ffe400"/></svg></button>
  <button aria-label="VirtualBox" class="grid w-[98px] place-items-center bg-[linear-gradient(90deg,#76b9ed_78%,#5a8db5_78%)] bg-[length:80px_4px] bg-bottom bg-no-repeat pr-1"><svg class="h-12 w-10" viewBox="0 0 40 48"><path d="M20 36L30 40V44L20 48L10 44V40Z" fill="#8aa0c0"/><path d="M20 0L39 10V30L20 42L1 30V10Z" fill="#1c3a6c" stroke="#dde6f0" stroke-width="2"/><path d="M1 10L20 20L39 10M20 20V42" stroke="#dde6f0" stroke-width="3" fill="none"/><path d="M20 4L30 10L20 15L10 10Z" fill="none" stroke="#dde6f0" stroke-width="1.500"/><path d="M5 20L15 26M25 26L35 20" stroke="#dde6f0" stroke-width="3"/></svg></button>
  <button aria-label="Paint" class="grid w-[98px] place-items-center bg-[linear-gradient(#76b9ed,#76b9ed)] bg-[length:80px_4px] bg-bottom bg-no-repeat"><svg class="size-12" viewBox="0 0 48 48"><path d="M26 8C40 8 46 18 45 28C44 38 34 46 22 45C12 44 18 36 12 35C6 35 4 36 2 32C0 20 12 8 26 8Z" fill="#bfe0f4" stroke="#8ab4d0"/><circle cx="10" cy="26" r="4" fill="#e8402a"/><circle cx="17" cy="19" r="4" fill="#5cb82a"/><circle cx="26" cy="15" r="4.500" fill="#f4a41c"/><circle cx="20" cy="29" r="2.500" fill="#111"/><path d="M38 9L24 46" stroke="#e08830" stroke-width="3.500"/><path d="M36 10L38 2L44 0L48 6L42 11Z" fill="#d8b890"/></svg></button>

  <div class="ml-auto flex items-center">
    <button aria-label="People" class="mr-[52px]"><svg class="size-[30px]" viewBox="0 0 30 30" fill="none" stroke="#fff" stroke-width="2"><circle cx="20" cy="5" r="4.500"/><circle cx="9" cy="16" r="4.500"/><path d="M1 29Q2 21 9 21T17 29M14 14Q16 10 20 10Q27 10 28 18"/></svg></button>
    <button aria-label="Show hidden icons" class="mr-[37px]"><svg class="h-4 w-[26px]" viewBox="0 0 26 16" fill="none" stroke="#fff" stroke-width="2"><path d="M1 15L13 2L25 15"/></svg></button>
    <svg class="mr-[36px] h-5 w-[30px]" viewBox="0 0 30 20"><path d="M1 2H27V18H1Z" fill="none" stroke="#fff" stroke-width="2"/><path d="M5 5H10V15H5ZM28 7H30V13H28Z" fill="#fff"/></svg>
    <svg class="mr-[34px] size-[26px]" viewBox="0 0 26 26" fill="none" stroke="#fff" stroke-width="2"><path d="M1 25C2 12 12 2 25 1M7 25C8 15 15 8 25 7M13 25C14 18 18 14 25 13"/><circle cx="22" cy="22" r="3" fill="#fff" stroke="none"/></svg>
    <svg class="mr-[34px] h-7 w-[30px]" viewBox="0 0 30 28" fill="none" stroke="#fff" stroke-width="2"><path d="M1 9H5L11 3V25L5 19H1ZM18 9L28 19M28 9L18 19"/></svg>
    <time class="w-[106px] text-center text-[23px] leading-[37px]">2:53 PM<br>3/4/2019</time>
    <button aria-label="Notifications" class="relative ml-[38px] mr-[39px]"><svg class="size-8" viewBox="0 0 32 32"><path d="M0 0H32V26H18L12 32V26H0Z" fill="#fff"/><path d="M6 7H26M6 13H26M6 19H20" stroke="#111" stroke-width="2"/></svg><span class="absolute left-[14px] top-[14px] grid size-8 place-items-center rounded-full border-2 border-[#999] bg-[#333]/85 text-[20px] leading-5 font-bold">1</span></button>
    <span class="mr-2 h-20 w-[2px] bg-[#666]"></span>
  </div>
</footer>
</body>
</html>
